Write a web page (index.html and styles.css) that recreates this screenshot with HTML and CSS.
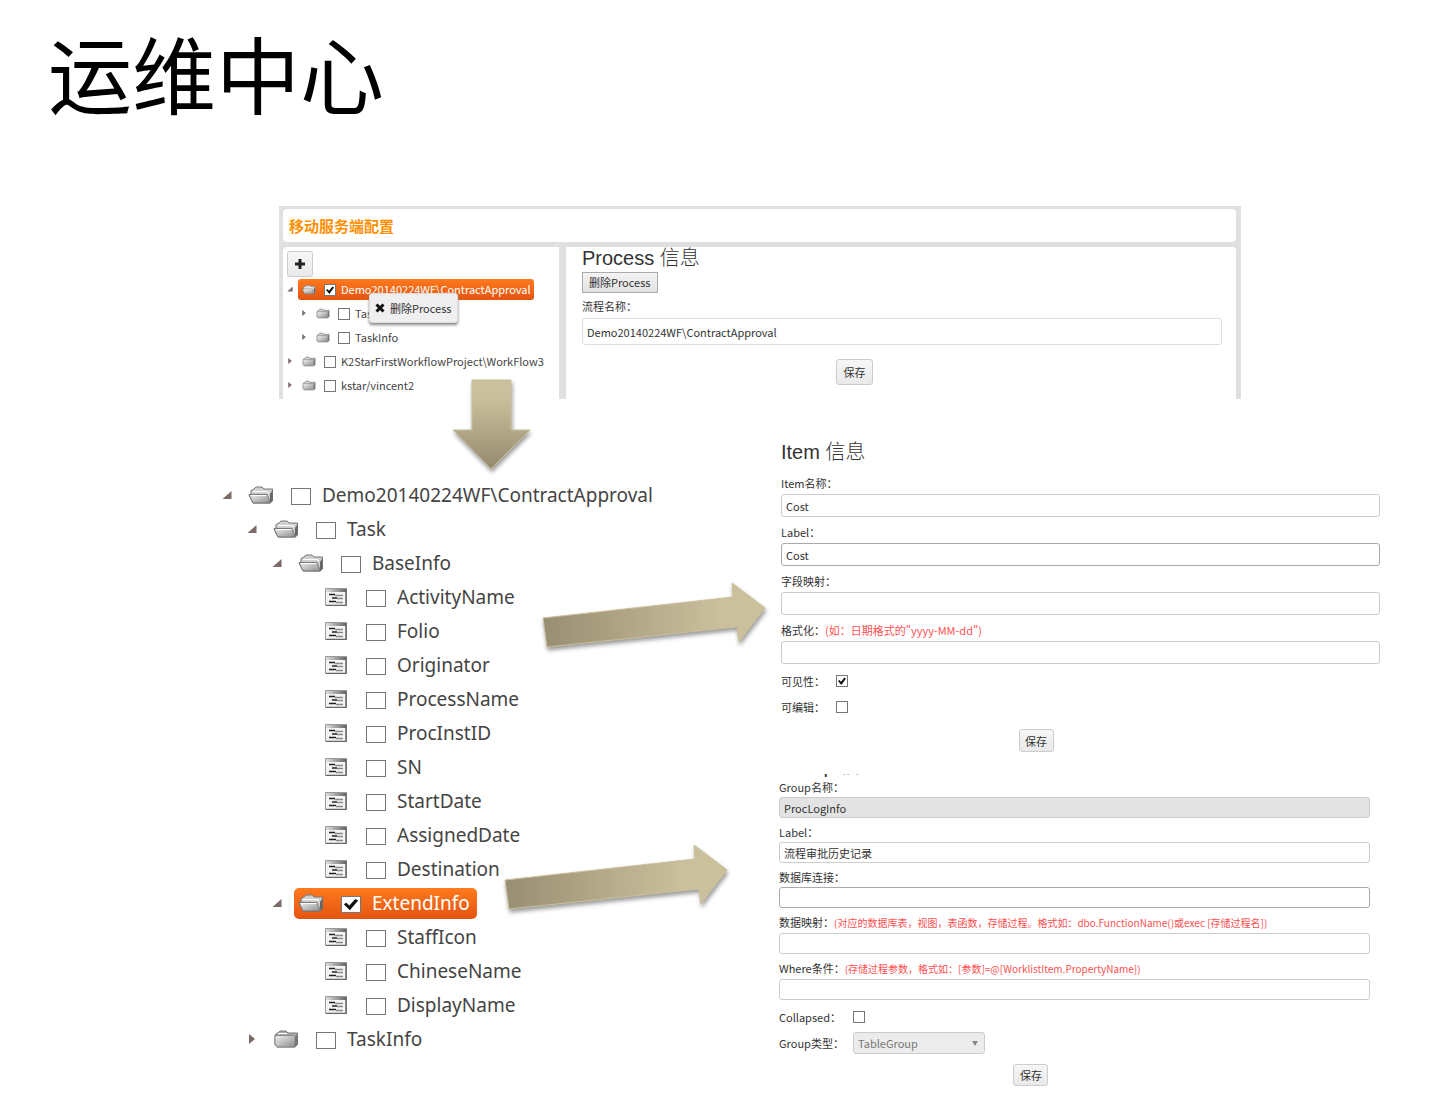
FILE: index.html
```html
<!DOCTYPE html>
<html lang="zh-CN">
  <head>
    <meta charset="utf-8">
    <title>运维中心</title>
    <meta name="viewport" content="width=device-width, initial-scale=1.0">
    <link rel="stylesheet" href="styles.css">
  </head>

  <body>
    <!-- shared icons -->
    <svg class="defs" width="0" height="0" aria-hidden="true">
      <defs>
        <linearGradient id="grey" x1="0" y1="0" x2="1" y2="1">
          <stop offset="0" stop-color="#f2f2f2"/>
          <stop offset="1" stop-color="#8c8c8c"/>
        </linearGradient>
        <linearGradient id="bar" x1="0" y1="0" x2="1" y2="0">
          <stop offset="0" stop-color="#e0e0e0"/>
          <stop offset="1" stop-color="#666"/>
        </linearGradient>
        <linearGradient id="sand-down" x1="0" y1="0" x2="0" y2="1">
          <stop offset="0.2" stop-color="#cbc09c"/>
          <stop offset="1" stop-color="#958a6e"/>
        </linearGradient>
        <linearGradient id="sand-right" x1="0" y1="0" x2="1" y2="0">
          <stop offset="0" stop-color="#988e72"/>
          <stop offset="0.8" stop-color="#cbc09c"/>
        </linearGradient>
      </defs>
      <symbol id="folder-open" viewBox="0 0 26 18">
        <path d="M3 8V4.500L6 3l2-2h6l2 2h8.500V15L22 17H5L1 9z" fill="#d0d0d0" stroke="#777"/>
        <path d="M22 8l2.500-4V15L22 17z" fill="#666"/>
        <path d="M5 5.500h14l2 1.500" fill="none" stroke="#fff"/>
        <path d="M1 8.500h18l3.500 8.500H5z" fill="url(#grey)" stroke="#777"/>
        <path d="M3 9.500h15.500" stroke="#fff"/>
      </symbol>
      <symbol id="folder" viewBox="0 0 26 18">
        <path d="M2 5l2-2h1l2-2h6l2 2h9.500V14.500L22 17H4L2 15z" fill="#aaa" stroke="#777"/>
        <path d="M2 7l1-1.500h18l1 1.500v10H4L2 15z" fill="url(#grey)" stroke="#888"/>
        <path d="M22 7l2-3V14.500L22 17z" fill="#777"/>
        <path d="M5 3.500h9" stroke="#fff"/>
      </symbol>
      <symbol id="form" viewBox="0 0 22 18">
        <path d="M.5.500h21v17H.5z" fill="#f4f4f4" stroke="#999"/>
        <path d="M1 1h20v3H1z" fill="url(#bar)"/>
        <path d="M21 1v16.500H1" fill="none" stroke="#666" stroke-width="1.500"/>
        <path d="M4 6.500h6M7 10h5M4 13.500h7" stroke="#222" stroke-width="1.500"/>
        <path d="M10 7.500h8M12 10.500h6M11 14.500h7" stroke="#888" stroke-width="1.500"/>
      </symbol>
      <symbol id="opened" viewBox="0 0 10 10">
        <path d="M9.500 1v8H.500z" fill="#7b6a66"/>
      </symbol>
      <symbol id="closed" viewBox="0 0 10 10">
        <path d="M2 0l6 5-6 5z" fill="#7b6a66"/>
      </symbol>
      <symbol id="arrow" viewBox="0 0 230 74">
        <path d="M4 38L194 17L193 3L226 28L200 62L198 47L8 67z" fill="url(#sand-right)" stroke="#cbc09a"/>
      </symbol>
    </svg>

    <div class="slide">
      <h1>运维中心</h1>

      <section class="console">
        <h2 class="console-title">移动服务端配置</h2>
        <div class="console-body">
          <div class="sidebar">
            <button class="btn add-btn" aria-label="+">
              <svg width="12" height="12" viewBox="0 0 12 12"><path d="M6 1v10M1 6h10" stroke="#222" stroke-width="3"/></svg>
            </button>
            <ul class="tree small">
              <li>
                <div class="row"><svg class="toggle"><use href="#opened"/></svg><label class="node selected"><svg class="icon"><use href="#folder-open"/></svg><input type="checkbox" checked><span>Demo20140224WF\ContractApproval</span></label></div>
                <ul>
                  <li><div class="row"><svg class="toggle"><use href="#closed"/></svg><label class="node"><svg class="icon"><use href="#folder"/></svg><input type="checkbox"><span>Task</span></label></div></li>
                  <li><div class="row"><svg class="toggle"><use href="#closed"/></svg><label class="node"><svg class="icon"><use href="#folder"/></svg><input type="checkbox"><span>TaskInfo</span></label></div></li>
                </ul>
              </li>
              <li><div class="row"><svg class="toggle"><use href="#closed"/></svg><label class="node"><svg class="icon"><use href="#folder"/></svg><input type="checkbox"><span>K2StarFirstWorkflowProject\WorkFlow3</span></label></div></li>
              <li><div class="row"><svg class="toggle"><use href="#closed"/></svg><label class="node"><svg class="icon"><use href="#folder"/></svg><input type="checkbox"><span>kstar/vincent2</span></label></div></li>
            </ul>
            <button class="context-menu">
              <svg width="10" height="10" viewBox="0 0 10 10"><path d="M1.500 1.500l7 7M8.500 1.500l-7 7" stroke="#111" stroke-width="3"/></svg>
              删除Process
            </button>
          </div>
          <form class="process">
            <h3>Process 信息</h3>
            <button type="button" class="delete-btn">删除Process</button>
            <label for="process-name">流程名称：</label>
            <input type="text" id="process-name" value="Demo20140224WF\ContractApproval">
            <button type="button" class="btn save-btn">保存</button>
          </form>
        </div>
      </section>

      <main class="details">
        <ul class="tree">
          <li>
            <div class="row"><svg class="toggle"><use href="#opened"/></svg><label class="node"><svg class="icon"><use href="#folder-open"/></svg><input type="checkbox"><span>Demo20140224WF\ContractApproval</span></label></div>
            <ul>
              <li>
                <div class="row"><svg class="toggle"><use href="#opened"/></svg><label class="node"><svg class="icon"><use href="#folder-open"/></svg><input type="checkbox"><span>Task</span></label></div>
                <ul>
                  <li>
                    <div class="row"><svg class="toggle"><use href="#opened"/></svg><label class="node"><svg class="icon"><use href="#folder-open"/></svg><input type="checkbox"><span>BaseInfo</span></label></div>
                    <ul>
                      <li class="row leaf"><label class="node"><svg class="icon"><use href="#form"/></svg><input type="checkbox"><span>ActivityName</span></label></li>
                      <li class="row leaf"><label class="node"><svg class="icon"><use href="#form"/></svg><input type="checkbox"><span>Folio</span></label></li>
                      <li class="row leaf"><label class="node"><svg class="icon"><use href="#form"/></svg><input type="checkbox"><span>Originator</span></label></li>
                      <li class="row leaf"><label class="node"><svg class="icon"><use href="#form"/></svg><input type="checkbox"><span>ProcessName</span></label></li>
                      <li class="row leaf"><label class="node"><svg class="icon"><use href="#form"/></svg><input type="checkbox"><span>ProcInstID</span></label></li>
                      <li class="row leaf"><label class="node"><svg class="icon"><use href="#form"/></svg><input type="checkbox"><span>SN</span></label></li>
                      <li class="row leaf"><label class="node"><svg class="icon"><use href="#form"/></svg><input type="checkbox"><span>StartDate</span></label></li>
                      <li class="row leaf"><label class="node"><svg class="icon"><use href="#form"/></svg><input type="checkbox"><span>AssignedDate</span></label></li>
                      <li class="row leaf"><label class="node"><svg class="icon"><use href="#form"/></svg><input type="checkbox"><span>Destination</span></label></li>
                    </ul>
                  </li>
                  <li>
                    <div class="row"><svg class="toggle"><use href="#opened"/></svg><label class="node selected"><svg class="icon"><use href="#folder-open"/></svg><input type="checkbox" checked><span>ExtendInfo</span></label></div>
                    <ul>
                      <li class="row leaf"><label class="node"><svg class="icon"><use href="#form"/></svg><input type="checkbox"><span>StaffIcon</span></label></li>
                      <li class="row leaf"><label class="node"><svg class="icon"><use href="#form"/></svg><input type="checkbox"><span>ChineseName</span></label></li>
                      <li class="row leaf"><label class="node"><svg class="icon"><use href="#form"/></svg><input type="checkbox"><span>DisplayName</span></label></li>
                    </ul>
                  </li>
                </ul>
              </li>
              <li>
                <div class="row"><svg class="toggle"><use href="#closed"/></svg><label class="node"><svg class="icon"><use href="#folder"/></svg><input type="checkbox"><span>TaskInfo</span></label></div>
              </li>
            </ul>
          </li>
        </ul>

        <div class="forms">
          <form class="item-form">
            <h3>Item 信息</h3>
            <label for="item-name">Item名称：</label>
            <input type="text" id="item-name" value="Cost">
            <label for="item-label">Label：</label>
            <input type="text" id="item-label" class="dark" value="Cost">
            <label for="item-field">字段映射：</label>
            <input type="text" id="item-field">
            <label for="item-format">格式化：<span class="hint">(如：日期格式的"yyyy-MM-dd")</span></label>
            <input type="text" id="item-format">
            <div class="option"><label for="visible">可见性：</label><input type="checkbox" id="visible" checked></div>
            <div class="option"><label for="editable">可编辑：</label><input type="checkbox" id="editable"></div>
            <button type="button" class="btn save-btn">保存</button>
          </form>

          <form class="group-form">
            <h3>Group 信息</h3>
            <label for="group-name">Group名称：</label>
            <input type="text" id="group-name" value="ProcLogInfo" disabled>
            <label for="group-label">Label：</label>
            <input type="text" id="group-label" value="流程审批历史记录">
            <label for="group-db">数据库连接：</label>
            <input type="text" id="group-db" class="dark">
            <label for="group-map">数据映射：<span class="hint">(对应的数据库表，视图，表函数，存储过程。格式如：dbo.FunctionName()或exec [存储过程名])</span></label>
            <input type="text" id="group-map">
            <label for="group-where">Where条件：<span class="hint">(存储过程参数，格式如：[参数]=@[WorklistItem.PropertyName])</span></label>
            <input type="text" id="group-where">
            <div class="option"><label for="collapsed">Collapsed：</label><input type="checkbox" id="collapsed"></div>
            <div class="option">
              <label for="group-type">Group类型：</label>
              <div class="select"><select id="group-type" disabled><option>TableGroup</option></select></div>
            </div>
            <button type="button" class="btn save-btn">保存</button>
          </form>
        </div>
      </main>

      <!-- arrows lie over the panels -->
      <svg class="arrow arrow-down" viewBox="0 0 84 96"><path d="M22 2h39v50h19L41 91L3 52h19z" fill="url(#sand-down)" stroke="#cbc09a"/></svg>
      <svg class="arrow arrow-item"><use href="#arrow"/></svg>
      <svg class="arrow arrow-group"><use href="#arrow"/></svg>
    </div>
  </body>
</html>
```
FILE: styles.css
```css
* {
  box-sizing: border-box;
}

body {
  margin: 0;
  background: #fff;
  color: #333;
  font-family: "Noto Sans CJK SC", sans-serif;
  font-size: 11px;
}

h1, h2, h3, ul {
  margin: 0;
  padding: 0;
  font-weight: normal;
}

button, input, select {
  margin: 0;
  font-family: inherit;
  font-size: inherit;
  color: inherit;
}

.defs {
  position: absolute;
}

.slide {
  position: relative;
}

h1 {
  padding: 22px 48px 84px;
  color: #000;
  font-size: 84px;
  line-height: 100px;
}

h3 {
  font-family: "Liberation Sans", "Noto Sans CJK SC", sans-serif;
  font-size: 20px;
  font-weight: 300;
  line-height: 22px;
}

/* top panel */
.console {
  margin: 0 194px 0 279px;
  padding: 3px 5px 0 4px;
  background: #e0e0e0;
}

.console-title {
  height: 33px;
  padding: 0 6px;
  border-radius: 4px;
  background: #fff;
  color: #ff9000;
  font-size: 15px;
  font-weight: bold;
  line-height: 34px;
}

.console-body {
  display: grid;
  grid-template-columns: 276px 1fr;
  gap: 7px;
  margin-top: 5px;
}

.sidebar {
  position: relative;
  padding: 4px 4px 2px;
  border-radius: 4px 0 0 0;
  background: #fff;
}

.context-menu {
  display: flex;
  position: absolute;
  top: 46px;
  left: 86px;
  align-items: center;
  gap: 5px;
  height: 30px;
  padding: 0 5px;
  border: 1px solid #ddd;
  border-radius: 3px;
  background: #efefef;
  box-shadow: 0 2px 3px #888;
}

.btn {
  display: flex;
  align-items: center;
  justify-content: center;
  padding: 0;
  border: 1px solid #ccc;
  border-radius: 3px;
  background: linear-gradient(#f7f7f7, #e9e9e9);
}

.add-btn {
  width: 26px;
  height: 26px;
}

.save-btn {
  width: 35px;
  height: 23px;
  margin-left: calc(40% - 2px);
}

/* text fields */
label {
  display: block;
  line-height: 20px;
}

input[type="text"] {
  display: block;
  width: 100%;
  height: 23px;
  padding: 0 4px;
  border: 1px solid #ccc;
  border-radius: 3px;
  background: #fff;
}

input[type="text"].dark {
  border-color: #aaa;
}

input[type="text"]:disabled {
  background: #e3e3e3;
}

input[type="checkbox"] {
  flex: none;
  appearance: none;
  width: 12px;
  height: 12px;
  border: 1px solid #777;
  background: #fff;
}

input[type="checkbox"]:checked::before {
  content: "";
  display: block;
  width: 80%;
  height: 80%;
  margin: 10%;
  background: #111;
  clip-path: polygon(0 50%, 18% 38%, 38% 60%, 80% 5%, 100% 18%, 42% 100%);
}

.process {
  padding: 0 14px 14px 16px;
  border-radius: 0 4px 0 0;
  background: #fff;
}

.process .delete-btn {
  display: block;
  height: 21px;
  margin: 3px 0;
  padding: 0 6px;
  border: 1px solid #aaa;
  background: linear-gradient(#f4f4f4, #e2e2e2);
  line-height: 19px;
}

.process input {
  height: 27px;
  margin: 2px 0 14px;
  border-color: #ddd;
}

.process .save-btn {
  width: 37px;
  height: 26px;
}

/* trees */
.tree, .tree ul {
  list-style: none;
}

.tree {
  color: #444;
  font-family: "Noto Sans", sans-serif;
  font-size: 19px;
}

.tree ul {
  padding-left: 25px;
}

.row {
  display: flex;
  align-items: center;
  gap: 12px;
  height: 34px;
}

.node {
  display: flex;
  align-items: center;
  height: 31px;
  padding: 0 7px 0 4px;
  border-radius: 5px;
  line-height: 31px;
  white-space: nowrap;
}

.selected {
  background: linear-gradient(#ff7a1e, #e4540f);
  color: #fff;
}

.toggle {
  flex: none;
  width: 10px;
  height: 10px;
}

.icon {
  width: 26px;
  height: 18px;
}

.leaf {
  padding-left: 22px;
}

.tree input {
  width: 20px;
  height: 17px;
  margin: 2px 11px 0 17px;
}

.small {
  font-family: "Noto Sans CJK SC", sans-serif;
  font-size: 11px;
}

.small ul {
  padding-left: 14px;
}

.small .row {
  gap: 5px;
  height: 24px;
}

.small .node {
  height: 21px;
  padding: 0 3px 0 4px;
  border-radius: 3px;
  line-height: 21px;
}

.small .toggle {
  width: 6px;
  height: 6px;
}

.small .icon {
  width: 14px;
  height: 11px;
}

.small input {
  width: 12px;
  height: 12px;
  margin: 2px 5px 0 8px;
}

/* lower half */
.details {
  display: grid;
  grid-template-columns: 557px 1fr;
  margin-top: 40px;
  padding-left: 222px;
}

.details > .tree {
  padding-top: 39px;
}

.item-form {
  margin: 0 55px 22px 2px;
}

.item-form h3 {
  margin: 2px 0 9px;
}

.item-form > label {
  line-height: 22px;
}

.item-form input[type="text"] {
  margin-bottom: 4px;
}

.hint {
  color: #ff5050;
}

.option {
  display: flex;
  align-items: center;
  height: 26px;
}

.option label {
  width: 55px;
}

.item-form .save-btn {
  margin-top: 9px;
}

.group-form {
  margin-right: 65px;
}

/* only the foot of this heading shows */
.group-form h3 {
  display: flex;
  align-items: flex-end;
  height: 3px;
  overflow: hidden;
}

.group-form input[type="text"] {
  height: 21px;
  margin-bottom: 4px;
}

.group-form .hint {
  font-size: 10px;
}

.group-form .option label {
  width: 74px;
}

.select {
  position: relative;
}

.select::after {
  content: "";
  position: absolute;
  top: 9px;
  right: 7px;
  border: 3px solid transparent;
  border-top: 5px solid #888;
  border-bottom: 0;
}

.select select {
  display: block;
  appearance: none;
  width: 132px;
  height: 22px;
  padding: 0 4px;
  border: 1px solid #ccc;
  border-radius: 3px;
  background: #ececec;
  color: #777;
  opacity: 1;
}

.group-form .save-btn {
  height: 22px;
  margin-top: 8px;
}

/* arrows */
.arrow {
  position: absolute;
  width: 230px;
  height: 74px;
  filter: drop-shadow(1px 3px 2px #999);
}

.arrow-down {
  top: 378px;
  left: 450px;
  width: 84px;
  height: 96px;
}

.arrow-item {
  top: 580px;
  left: 539px;
}

.arrow-group {
  top: 842px;
  left: 501px;
}
```
